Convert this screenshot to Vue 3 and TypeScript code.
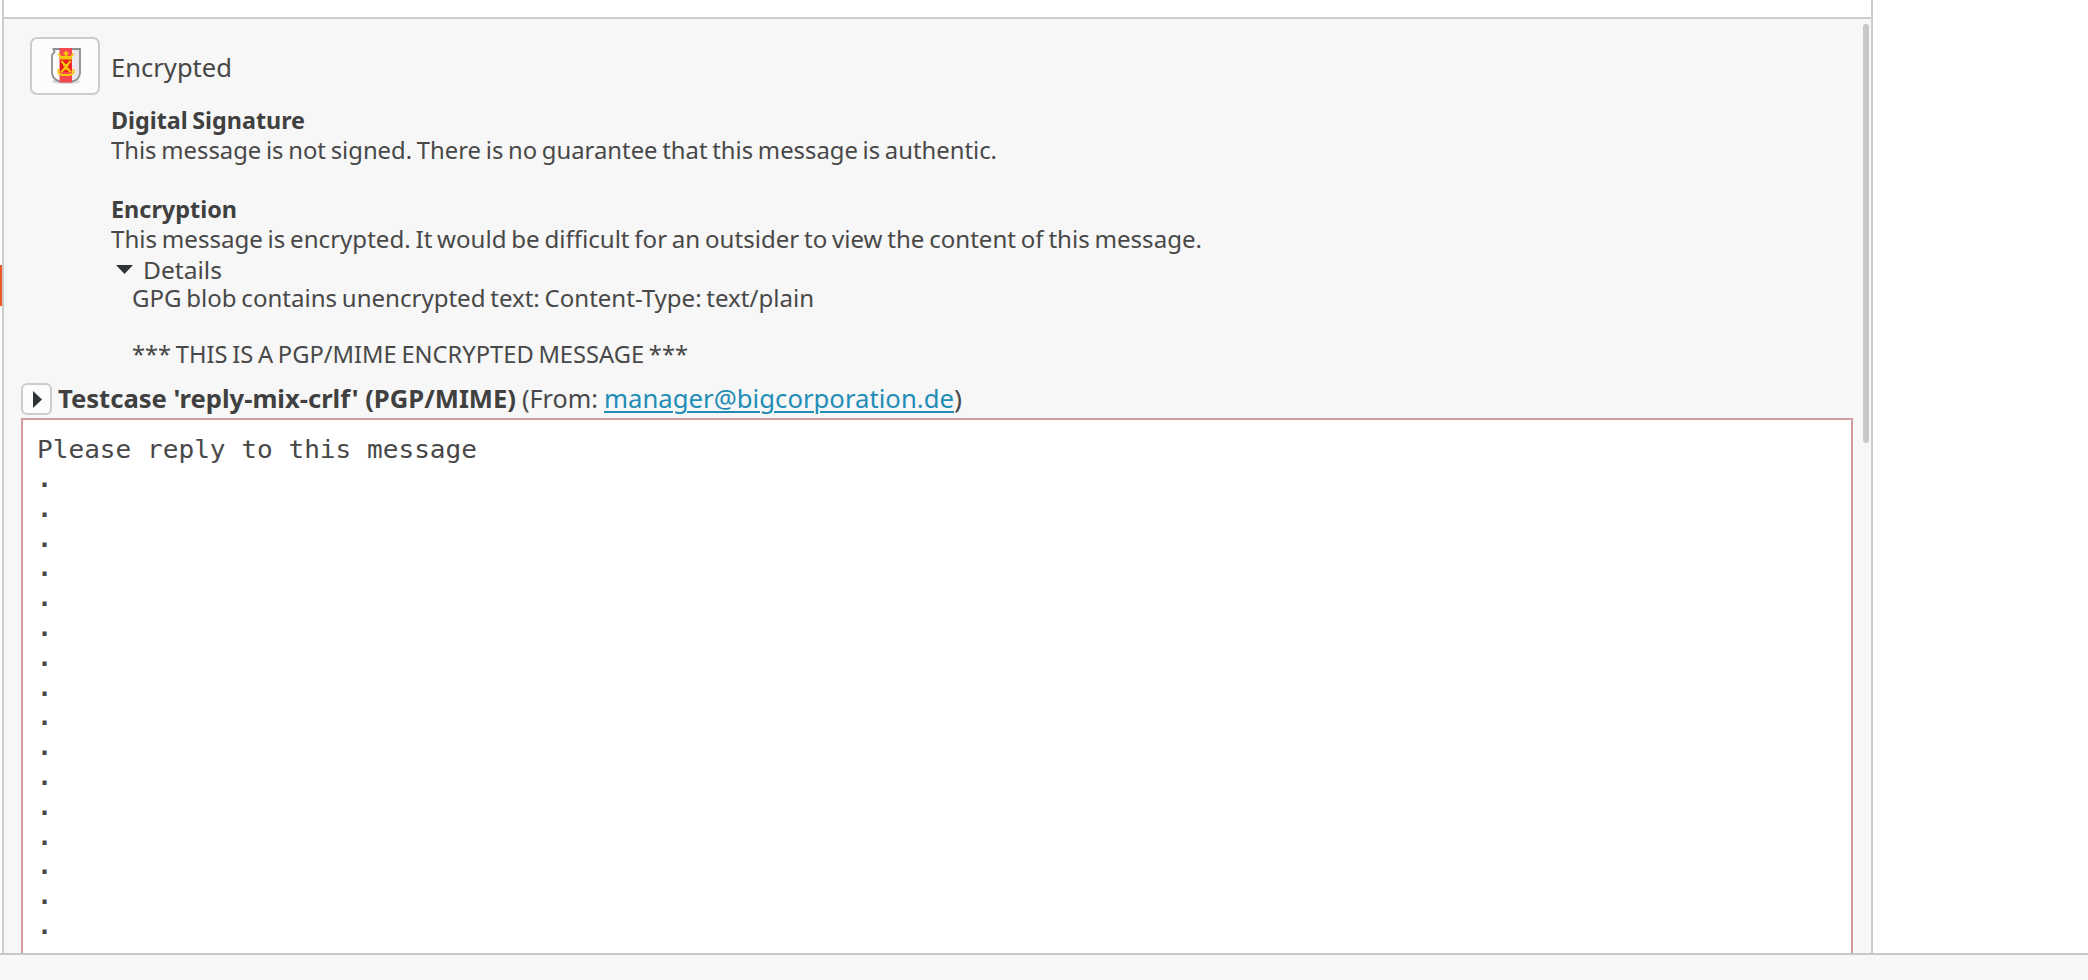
<script setup lang="ts">
import type { Directive } from 'vue'

/* Condenses or widens a run of text to the given advance width in pixels. */
const vFit: Directive<HTMLElement, number> = {
  mounted(el, binding) {
    const natural = el.getBoundingClientRect().width
    if (natural) el.style.transform = `scaleX(${binding.value / natural})`
  },
}
const dotLines = 16
</script>

<template>
  <div class="window">
    <div class="main">
      <div class="rail"><i class="marker"></i></div>
      <section class="pane">
        <div class="top"></div>
        <div class="body">
          <header class="status">
            <button class="lock" aria-label="Encrypted">
              <svg width="32" height="38" viewBox="0 0 32 38">
                <defs>
                  <linearGradient id="shade" x1="0" x2="1"><stop offset="0" stop-color="#fff" /><stop offset="1" stop-color="#e9e0e8" /></linearGradient>
                </defs>
                <ellipse cx="16" cy="34.5" rx="14" ry="2.5" fill="#d8d8d8" />
                <path d="M3.500 2H30V26Q29.500 33 22 34.500H10Q3 33 2 26V8L4.500 5Z" fill="url(#shade)" stroke="#8d8d8d" stroke-width="1.800" />
                <path d="M9.500 1H22V35.500H9.500Z" fill="#f4484e" />
                <path d="M10 12H21.500V25H10Z" fill="#ef1b20" />
                <path d="M8.500 6.500L11 10H21L23.500 6.500M16 4V10M13.500 6.500H18.500M10 11.500H22M11.500 14L20.500 25M20.500 14L11.500 25M13 18H19M8.500 22V26L12 28H20L23.500 26V22M11 25L16 21L21 25" fill="none" stroke="#f5c60c" stroke-width="2" />
              </svg>
            </button>
            <span class="title" v-fit="121">Encrypted</span>
          </header>
          <div class="info">
            <div class="line bold"><span v-fit="194">Digital Signature</span></div>
            <div class="line"><span v-fit="886">This message is not signed. There is no guarantee that this message is authentic.</span></div>
            <div class="line"></div>
            <div class="line bold"><span v-fit="126">Encryption</span></div>
            <div class="line"><span v-fit="1091">This message is encrypted. It would be difficult for an outsider to view the content of this message.</span></div>
            <div class="details">
              <svg width="17" height="9" viewBox="0 0 17 9"><path d="M0 0H17L8.500 9Z" fill="#2e3436" /></svg>
              <span v-fit="79">Details</span>
            </div>
            <div class="blob"><span v-fit="682">GPG blob contains unencrypted text: Content-Type: text/plain</span></div>
            <div class="blob"></div>
            <div class="blob"><span v-fit="556">*** THIS IS A PGP/MIME ENCRYPTED MESSAGE ***</span></div>
          </div>
          <div class="subject">
            <button class="expand" aria-label="Expand">
              <svg width="9" height="17" viewBox="0 0 9 17"><path d="M0 0L9 8.500L0 17Z" fill="#2e3436" /></svg>
            </button>
            <span class="slot name"><b v-fit="458">Testcase 'reply-mix-crlf' (PGP/MIME)</b></span>
            <span class="slot from"><span v-fit="76">(From:</span></span>
            <span class="slot mail"><a v-fit="350">manager@bigcorporation.de</a></span>
            <span class="slot"><span v-fit="8">)</span></span>
          </div>
          <div class="message">
            <div class="first"><span v-fit="440">Please reply to this message</span></div>
            <div v-for="n in dotLines" :key="n" class="dot">.</div>
          </div>
          <i class="thumb"></i>
        </div>
      </section>
      <div class="blank"></div>
    </div>
    <footer class="footer"></footer>
  </div>
</template>

<style>
body { overflow: hidden; }
</style>

<style scoped>
* { box-sizing: border-box; }
.window { width: 2088px; height: 980px; display: flex; flex-direction: column; background: #fff; color: #484848; font: 24px "Noto Sans", sans-serif; overflow: hidden; }
.main { height: 953px; display: flex; }
.rail { width: 2px; padding-top: 265px; }
.marker { display: block; width: 2px; height: 41px; background: #f15a27; }
.pane { width: 1871px; height: 953px; border: 2px solid #ccc; border-top: 0; border-bottom: 0; overflow: hidden; }
.top { height: 19px; border-bottom: 2px solid #ccc; }
.body { position: relative; height: 934px; background: #f7f7f7; padding: 17px 17px 0; overflow: hidden; }
.status { display: flex; align-items: center; gap: 11px; height: 59px; padding-left: 9px; }
.lock { width: 70px; height: 58px; padding: 0 0 0 2px; display: flex; align-items: center; justify-content: center; background: #fcfcfc; border: 2px solid #ccc; border-radius: 7px; }
.title { font-size: 25px; line-height: 34px; padding-top: 2px; }
span, b, a { display: inline-block; white-space: pre; transform-origin: 0 50%; }
.info { padding: 10px 0 0 90px; }
.line { height: 29.800px; line-height: 29.800px; word-spacing: -1.500px; }
.bold { font-weight: 700; color: #404040; }
.details { display: flex; align-items: center; gap: 10px; height: 30px; padding: 2px 0 0 5px; line-height: 26px; }
.blob { height: 28px; line-height: 28px; padding-left: 21px; word-spacing: -1.500px; }
.subject { display: flex; align-items: center; height: 37px; margin-top: 13px; font-size: 24.500px; line-height: 34px; }
.expand { width: 31px; height: 32px; margin-right: 6px; padding: 0 0 0 2px; display: flex; align-items: center; justify-content: center; background: #fcfcfc; border: 2px solid #ccc; border-radius: 6px; }
.slot { height: 34px; }
.name { width: 464px; color: #404040; }
.from { width: 82px; }
.mail { width: 350px; }
a { color: #1f8db5; text-decoration: underline; text-decoration-thickness: 2px; text-underline-offset: 3px; }
.message { width: 1832px; height: 560px; border: 2px solid #cf9c9f; background: #fff; padding: 15px 14px; font-family: "DejaVu Sans Mono", monospace; font-size: 25px; }
.first { height: 29px; line-height: 30px; }
.dot { height: 29.800px; line-height: 29.800px; font-weight: 700; }
.thumb { position: absolute; right: 2px; top: 5px; width: 6px; height: 419px; border-radius: 3px; background: #c8c8c8; }
.blank { flex: 1; }
.footer { flex: 1; border-top: 2px solid #c8c8c8; background: #f7f7f7; }
</style>
